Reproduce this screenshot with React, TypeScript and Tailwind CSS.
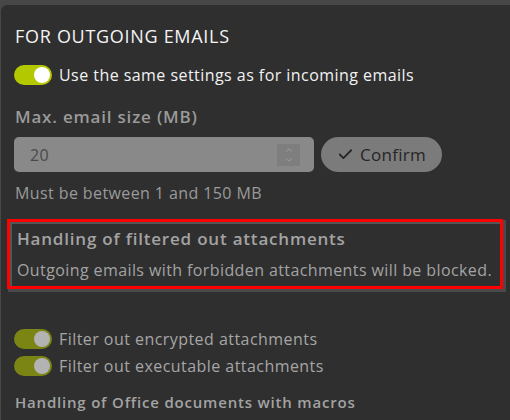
import React from 'react';
import { Check, ChevronUp, ChevronDown } from 'lucide-react';

interface ToggleProps {
    on: boolean;
    dim?: boolean;
    label: string;
}

const Toggle: React.FC<ToggleProps> = ({ on, dim, label }) => {
    const track = dim ? 'bg-[#7a8514]' : 'bg-[#b4c800]';
    const knob = dim ? 'bg-[#b3b3b3]' : 'bg-white';
    return (
        <div className="flex items-center gap-[7px]">
            <div className={`w-[38px] h-[20px] rounded-full ${track} flex items-center ${on ? 'justify-end' : 'justify-start'} px-[2px]`}>
                <div className={`w-[16px] h-[16px] rounded-full ${knob}`}></div>
            </div>
            <span className={`text-[16px] leading-[20px] tracking-[0.45px] ${dim ? 'text-[#a6a6a6]' : 'text-[#f2f2f2]'}`}>{label}</span>
        </div>
    );
};

const App: React.FC = () => {
    return (
        <div className="w-[510px] h-[420px] overflow-hidden bg-[#474747] pt-[5px] pl-[1px]" style={{ fontFamily: '"Open Sans", sans-serif' }}>
            <div className="h-full bg-[#2f2f2f] rounded-tl-[6px] pl-[13px] pr-[8px] pt-[19px]">
                <h2 className="text-[18px] leading-[24px] tracking-[0.7px] text-[#f4f4f4] pl-[1px]">FOR OUTGOING EMAILS</h2>

                <div className="mt-[17px]">
                    <Toggle on label="Use the same settings as for incoming emails" />
                </div>

                <div className="mt-[20px] pl-[1px] text-[17px] leading-[24px] tracking-[0.8px] font-semibold text-[#9a9a9a]">
                    Max. email size (MB)
                </div>

                <div className="mt-[8px] flex items-center gap-[7px]">
                    <div className="w-[300px] h-[35px] rounded-[5px] bg-[#898989] flex items-center justify-between pl-[16px] pr-[14px]">
                        <span className="text-[16px] tracking-[0.45px] text-[#4a4a4a]">20</span>
                        <div className="w-[23px] h-[22px] bg-[#7e7e7e] flex flex-col items-center justify-center text-[#a3a3a3]">
                            <ChevronUp size={10} strokeWidth={2} />
                            <ChevronDown size={10} strokeWidth={2} />
                        </div>
                    </div>
                    <button className="w-[121px] h-[35px] rounded-full bg-[#7b7b7b] flex items-center justify-center gap-[6px] text-[#262626]">
                        <Check size={17} strokeWidth={2.5} />
                        <span className="text-[17px] tracking-[0.3px]">Confirm</span>
                    </button>
                </div>

                <div className="mt-[10px] pl-[1px] text-[16px] leading-[22px] tracking-[0.4px] text-[#9a9a9a]">
                    Must be between 1 and 150 MB
                </div>

                <div className="mt-[15px] -ml-[7px] w-[496px] border-[3px] border-[#ff0000] shadow-[2px_2px_0_1px_#4a4a4a]">
                    <div className="border-t-2 border-l-2 border-[#555555] pl-[5px] pt-[3px] pb-[5px]">
                        <div className="text-[17px] leading-[24px] tracking-[0.8px] font-semibold text-[#a3a3a3]">
                            Handling of filtered out attachments
                        </div>
                        <div className="mt-[8px] text-[16px] leading-[22px] tracking-[0.4px] text-[#a3a3a3]">
                            Outgoing emails with forbidden attachments will be blocked.
                        </div>
                    </div>
                </div>

                <div className="mt-[40px] flex flex-col gap-[7px]">
                    <Toggle on dim label="Filter out encrypted attachments" />
                    <Toggle on dim label="Filter out executable attachments" />
                </div>

                <div className="mt-[15px] pl-[1px] text-[15px] leading-[22px] tracking-[0.8px] font-semibold text-[#a3a3a3]">
                    Handling of Office documents with macros
                </div>
            </div>
        </div>
    );
};

export default App;
